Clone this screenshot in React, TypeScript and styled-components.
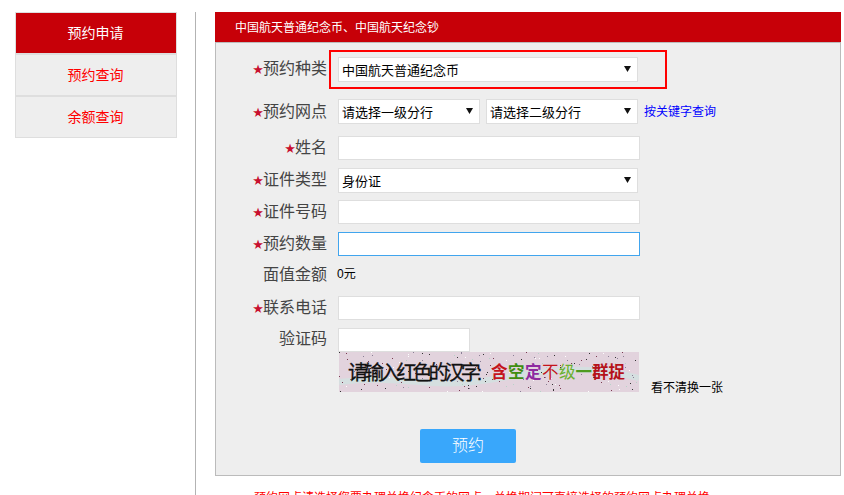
import React from "react";
import styled, { createGlobalStyle } from "styled-components";

const FONT = `"Liberation Sans", "Noto Sans CJK SC", sans-serif`;

const Global = createGlobalStyle`
  html, body { margin: 0; padding: 0; background: #fff; overflow: hidden; }
  body { font-family: ${FONT}; }
  * { box-sizing: border-box; }
`;

const Page = styled.div`
  display: flex;
  width: 844px;
  height: 495px;
  padding: 12px 3px 0 15px;
  overflow: hidden;
`;

const Sidebar = styled.nav`
  width: 162px;
  height: 126px;
  flex: none;
  display: flex;
  flex-direction: column;
  gap: 2px;
  background: #dedede;
  border: 1px solid #dedede;
`;

const NavItem = styled.a<{ $active?: boolean }>`
  flex: 1;
  display: flex;
  align-items: center;
  justify-content: center;
  padding: 0 1px 2px 0;
  font-size: 14px;
  text-decoration: none;
  color: ${(p) => (p.$active ? "#fff" : "#f00")};
  background: ${(p) => (p.$active ? "#c70008" : "#eee")};
`;

const Divider = styled.div`
  width: 1px;
  flex: none;
  margin: 0 19px 0 18px;
  background: #b3b3b3;
`;

const Main = styled.main`
  width: 626px;
  flex: none;
`;

const Title = styled.h2`
  margin: 0;
  height: 30px;
  padding: 0 0 1px 20px;
  display: flex;
  align-items: center;
  font-size: 12px;
  font-weight: 400;
  color: #fff;
  background: #c70008;
`;

const Panel = styled.form`
  height: 434px;
  padding-top: 7px;
  background: #eee;
  border: 1px solid #bbb;
`;

const Row = styled.div<{ $h: number; $mb?: number }>`
  display: flex;
  align-items: center;
  height: ${(p) => p.$h}px;
  margin-bottom: ${(p) => p.$mb ?? 0}px;
`;

const Label = styled.label<{ $up?: boolean }>`
  width: 111px;
  flex: none;
  margin-right: 11px;
  margin-bottom: ${(p) => (p.$up ? 2 : 0)}px;
  text-align: right;
  font-size: 16px;
  line-height: 24px;
  color: #444;
  white-space: nowrap;
`;

const Star = styled.span`
  display: inline-block;
  vertical-align: top;
  height: 24px;
  padding-top: 1px;
  margin-right: -1px;
  color: #c8102e;
  font-family: "DejaVu Sans", sans-serif;
  font-size: 13px;
  line-height: 24px;
`;

const Highlight = styled.div`
  width: 338px;
  height: 39px;
  margin-left: -9px;
  padding-left: 7px;
  display: flex;
  align-items: center;
  border: 2px solid #f00;
`;

const SelectWrap = styled.div<{ $w: number }>`
  position: relative;
  width: ${(p) => p.$w}px;
  height: 25px;
`;

const NativeSelect = styled.select`
  width: 100%;
  height: 100%;
  padding: 2px 0 0 3px;
  appearance: none;
  border: 1px solid #dedede;
  border-radius: 0;
  background: #fff;
  color: #000;
  font-family: ${FONT};
  font-size: 13px;
  outline: none;
`;

const Arrow = styled.svg`
  position: absolute;
  right: 7px;
  top: 8px;
  width: 7px;
  height: 7px;
`;

const Select = ({ w, value }: { w: number; value: string }) => (
  <SelectWrap $w={w}>
    <NativeSelect defaultValue={value}>
      <option>{value}</option>
    </NativeSelect>
    <Arrow viewBox="0 0 7 7">
      <path d="M0 1h7L3.5 7z" fill="#111" />
    </Arrow>
  </SelectWrap>
);

const Input = styled.input<{ $w?: number; $focus?: boolean }>`
  width: ${(p) => p.$w ?? 302}px;
  height: 24px;
  padding: 0 4px;
  background: #fff;
  border: 1px solid ${(p) => (p.$focus ? "#41a5ee" : "#dedede")};
  outline: none;
`;

const Gap = styled.div`
  width: 6px;
  flex: none;
`;

const KeywordLink = styled.a`
  margin: 0 0 2px 6px;
  font-size: 12px;
  color: #00f;
  text-decoration: none;
`;

const Amount = styled.span`
  margin: 0 0 8px -1px;
  font-size: 12px;
  color: #000;
`;

const CaptchaRow = styled.div`
  display: flex;
  align-items: flex-end;
  height: 40px;
  margin-left: 123px;
`;

const Refresh = styled.a`
  margin: 0 0 -3px 12px;
  font-size: 12px;
  line-height: 14px;
  color: #000;
  white-space: nowrap;
`;

const Submit = styled.button`
  display: block;
  width: 96px;
  height: 34px;
  margin: 37px 0 0 204px;
  padding: 0 0 4px;
  border: none;
  border-radius: 2px;
  background: #39a7fb;
  color: #fff;
  font-family: ${FONT};
  font-size: 16px;
  font-weight: 300;
`;

const Note = styled.p`
  margin: 14px 0 0 39px;
  font-size: 12px;
  line-height: 16px;
  color: #f00;
  white-space: nowrap;
`;

const dots = Array.from({ length: 190 }, (_, i) => ({
  x: (i * 73 + (i * i) % 41) % 300,
  y: (i * 37 + (i * i * 3) % 29) % 40,
  c: ["#333", "#8a7f96", "#b7d3c8", "#fff", "#7a3b52"][i % 5],
}));

const Captcha = () => (
  <svg width="300" height="40" viewBox="0 0 300 40" style={{ display: "block" }}>
    <rect width="300" height="40" fill="#e2d3dd" />
    <path d="M0 30C60 22 90 38 150 28S250 12 300 26" stroke="#d5dfe0" strokeWidth="6" fill="none" />
    {dots.map((d, i) => (
      <rect key={i} x={d.x} y={d.y} width="1" height="1" fill={d.c} />
    ))}
    <text x="9" y="28" fontSize="20" letterSpacing="-3.9" fill="#111" stroke="#111" strokeWidth="0.3" fontFamily={FONT}>请输入红色的汉字:</text>
    <text y="26" fontSize="16.5" fontFamily={FONT} fontWeight="700">
      <tspan x="152" fill="#c4141c">含</tspan>
      <tspan x="169" fill="#3f8d10">空</tspan>
      <tspan x="186" fill="#8e2aa0">定</tspan>
      <tspan x="203" fill="#c4141c" fontWeight="400">不</tspan>
      <tspan x="220" fill="#6ab030" fontWeight="400">级</tspan>
      <tspan x="236.5" fill="#4f9a20">一</tspan>
      <tspan x="253" fill="#b5121a">群</tspan>
      <tspan x="269.5" fill="#b5121a">捉</tspan>
    </text>
  </svg>
);

const Req = () => <Star>★</Star>;

export default function App() {
  return (
    <>
      <Global />
      <Page>
        <Sidebar>
          <NavItem $active>预约申请</NavItem>
          <NavItem>预约查询</NavItem>
          <NavItem>余额查询</NavItem>
        </Sidebar>
        <Divider />
        <Main>
          <Title>中国航天普通纪念币、中国航天纪念钞</Title>
          <Panel>
            <Row $h={39} $mb={10}>
              <Label $up><Req />预约种类</Label>
              <Highlight>
                <Select w={300} value="中国航天普通纪念币" />
              </Highlight>
            </Row>
            <Row $h={25} $mb={12}>
              <Label><Req />预约网点</Label>
              <Select w={142} value="请选择一级分行" />
              <Gap />
              <Select w={152} value="请选择二级分行" />
              <KeywordLink>按关键字查询</KeywordLink>
            </Row>
            <Row $h={24} $mb={8}>
              <Label><Req />姓名</Label>
              <Input />
            </Row>
            <Row $h={25} $mb={7}>
              <Label $up><Req />证件类型</Label>
              <Select w={300} value="身份证" />
            </Row>
            <Row $h={24} $mb={8}>
              <Label><Req />证件号码</Label>
              <Input />
            </Row>
            <Row $h={24} $mb={4}>
              <Label><Req />预约数量</Label>
              <Input $focus />
            </Row>
            <Row $h={32} $mb={4}>
              <Label $up>面值金额</Label>
              <Amount>0元</Amount>
            </Row>
            <Row $h={24} $mb={8}>
              <Label><Req />联系电话</Label>
              <Input />
            </Row>
            <Row $h={24}>
              <Label $up>验证码</Label>
              <Input $w={132} />
            </Row>
            <CaptchaRow>
              <Captcha />
              <Refresh>看不清换一张</Refresh>
            </CaptchaRow>
            <Submit type="button">预约</Submit>
          </Panel>
          <Note>预约网点请选择您要办理兑换纪念币的网点，兑换期间可直接选择的预约网点办理兑换</Note>
        </Main>
      </Page>
    </>
  );
}
